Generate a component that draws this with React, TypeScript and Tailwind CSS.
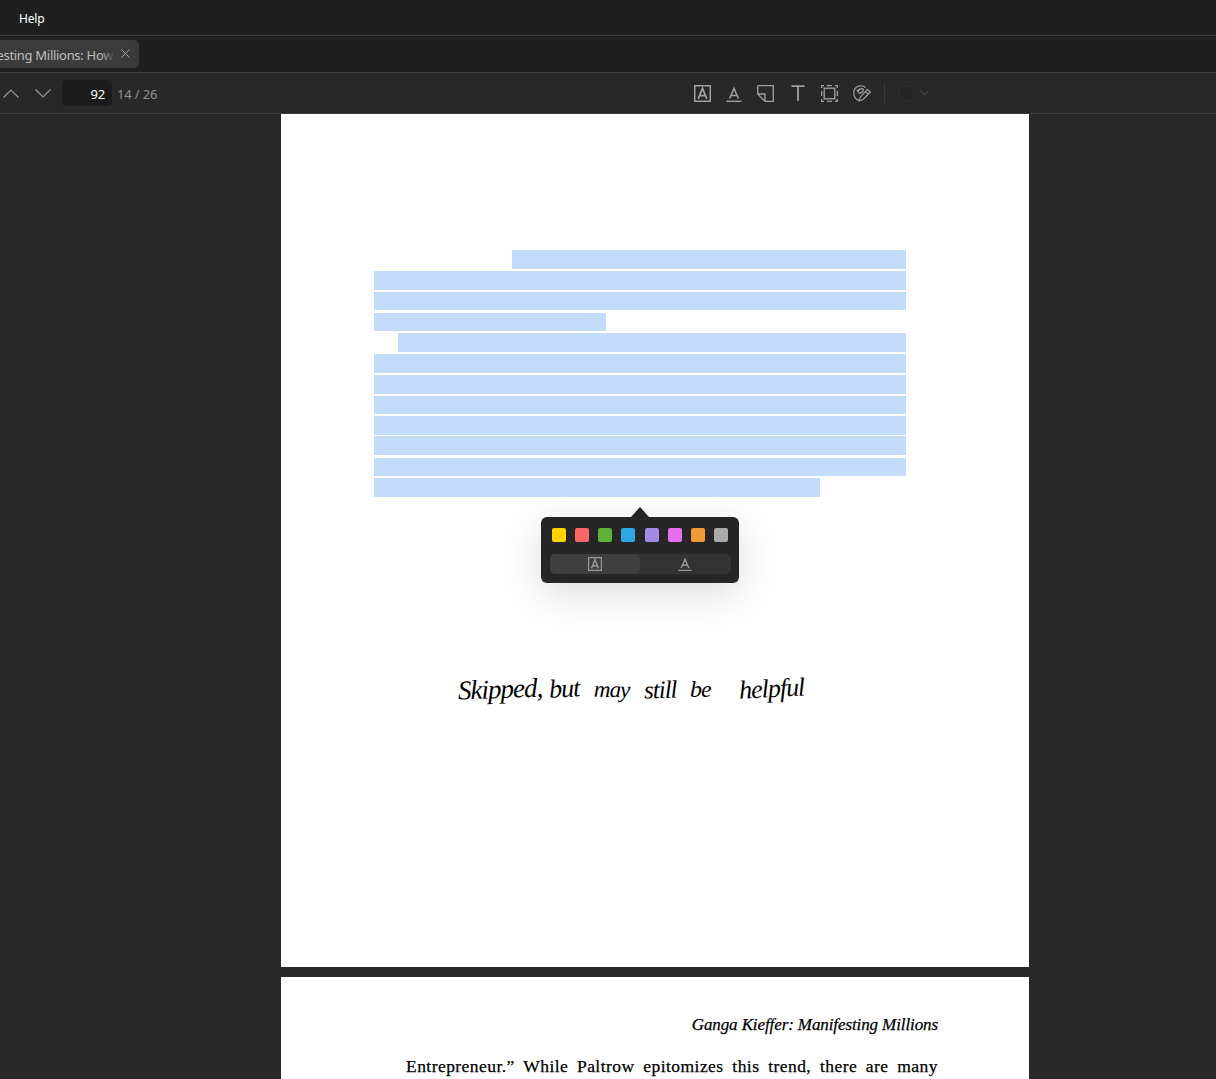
const swatches = [
  "bg-[#ffd400]",
  "bg-[#ff6666]",
  "bg-[#5fb236]",
  "bg-[#2ea8e5]",
  "bg-[#a28ae5]",
  "bg-[#e56eee]",
  "bg-[#f19837]",
  "bg-[#aaaaaa]",
];

const highlightRows = [
  "mt-0 ml-[138px] w-[394px] h-[19px]",
  "mt-[2px] ml-0 w-[532px] h-[19px]",
  "mt-[2px] ml-0 w-[532px] h-[18px]",
  "mt-[3px] ml-0 w-[232px] h-[18px]",
  "mt-[2px] ml-[24px] w-[508px] h-[19px]",
  "mt-[2px] ml-0 w-[532px] h-[19px]",
  "mt-[2px] ml-0 w-[532px] h-[19px]",
  "mt-[2px] ml-0 w-[532px] h-[18px]",
  "mt-[2px] ml-0 w-[532px] h-[19px]",
  "mt-[1px] ml-0 w-[532px] h-[19px]",
  "mt-[3px] ml-0 w-[532px] h-[18px]",
  "mt-[2px] ml-0 w-[446px] h-[19px]",
];

const inkWords = [
  { text: "Skipped,", cls: "w-[84px] ml-0 text-[27px] -rotate-2" },
  { text: "but", cls: "w-[33px] ml-[7px] text-[26px] -rotate-3" },
  { text: "may", cls: "w-[36px] ml-[12px] text-[23px] rotate-1" },
  { text: "still", cls: "w-[36px] ml-[14px] text-[25px] -rotate-2" },
  { text: "be", cls: "w-[24px] ml-[10px] text-[24px] rotate-0" },
  { text: "helpful", cls: "w-[68px] ml-[25px] text-[26px] -rotate-3" },
];

function BoxA({ className }: { className: string }) {
  return (
    <svg viewBox="0 0 16 16" fill="none" className={className}>
      <rect x="0.7" y="0.7" width="14.6" height="14.6" stroke="currentColor" strokeWidth="1.4" />
      <path d="M4 13 8 3l4 10M5.3 10h5.4" stroke="currentColor" strokeWidth="1.6" />
    </svg>
  );
}

function UnderA({ className }: { className: string }) {
  return (
    <svg viewBox="0 0 16 16" fill="none" className={className}>
      <path d="M3.6 12.5 8 2.5l4.4 10M5 9.5h6" stroke="currentColor" strokeWidth="1.6" />
      <path d="M0.5 15.3h15" stroke="currentColor" strokeWidth="1.4" />
    </svg>
  );
}

function ToolIcons() {
  return (
    <div className="flex items-center text-[#a0a0a0]">
      <BoxA className="w-[17px] h-[17px] -ml-px" />
      <UnderA className="w-[16px] h-[16px] ml-[15px] mt-[1px]" />
      <svg viewBox="0 0 17 17" fill="none" className="w-[17px] h-[17px] ml-[15px]">
        <path d="M.7.7h15.6v15.6H8L.7 9V.7M.7 9H8v7.3" stroke="currentColor" strokeWidth="1.3" />
      </svg>
      <svg viewBox="0 0 14 16" fill="none" className="w-[14px] h-[16px] ml-[17px]">
        <path d="M.5 1.2h13M7 1.2V16" stroke="currentColor" strokeWidth="1.8" />
      </svg>
      <svg viewBox="0 0 17 17" fill="none" className="w-[17px] h-[17px] ml-[16px]">
        <rect x="3.2" y="3.2" width="10.6" height="10.6" stroke="currentColor" strokeWidth="1.3" />
        <path d="M.7 3V.7H3M6 .7h5M14 .7h2.3V3M16.3 6v5M16.3 14v2.3H14M11 16.3H6M3 16.3H.7V14M.7 11V6" stroke="currentColor" strokeWidth="1.3" />
      </svg>
      <svg viewBox="0 0 18 17" fill="none" className="w-[18px] h-[17px] ml-[15px]">
        <path d="M12.5 2.5C9.5-.2 4 .6 1.8 3.8c-2 3-1 8.8 2 10.8.8.6 1.8.6 2.4.2M3.6 6.2C5.6 3.6 9.8 3 10.4 4.6c.6 1.8-3.8 4.6-5 3-.7-1 .4-2.8 1.8-3.4" stroke="currentColor" strokeWidth="1.2" />
        <path d="M14.4 4.4l2.9 2.6-7.5 7.7-3.6 1.1 1-3.6 7.2-7.8ZM12.4 6.6l2.9 2.6" stroke="currentColor" strokeWidth="1.2" />
      </svg>
    </div>
  );
}

function HighlightPopover() {
  return (
    <div className="absolute left-[260px] top-[393px] w-[198px]">
      <div className="mx-auto w-0 h-0 border-x-[9px] border-x-transparent border-b-[10px] border-b-[#262626]" />
      <div className="h-[66px] rounded-[6px] bg-[#262626] shadow-[0_10px_40px_rgba(0,0,0,0.14)] px-[9px] pt-[11px]">
        <div className="flex justify-between pl-[2px] pr-[2px]">
          {swatches.map((c) => (
            <div key={c} className={`w-[14px] h-[14px] rounded-[2px] ${c}`} />
          ))}
        </div>
        <div className="mt-[12px] flex w-[181px] h-[20px] rounded-[5px] bg-[#333333] text-[#9a9a9a]">
          <div className="w-[90px] rounded-[5px] bg-[#3f3f3f] flex items-center justify-center">
            <BoxA className="w-[14px] h-[14px]" />
          </div>
          <div className="flex-1 flex items-center justify-center pr-[2px]">
            <UnderA className="w-[14px] h-[14px]" />
          </div>
        </div>
      </div>
    </div>
  );
}

export default function App() {
  return (
    <div className="w-[1216px] h-[1079px] overflow-hidden bg-[#282828] font-['Noto_Sans',sans-serif]">
      <div className="h-[36px] bg-[#1f1f1f] border-b border-[#3d3d3d] pl-[19px] pt-[10px] text-[12px] tracking-[-0.2px] leading-[18px] text-white">
        Help
      </div>

      <div className="h-[37px] bg-[#1f1f1f] border-b border-[#3d3d3d] overflow-hidden pt-[4px]">
        <div className="relative ml-[-49px] w-[188px] h-[28px] rounded-[5px] bg-[#3b3b3b] flex items-center pl-[12px] text-[#bdbdbd]">
          <span className="w-[154px] mt-[3px] whitespace-nowrap overflow-hidden text-[13px] tracking-[-0.3px]">
            Manifesting Millions: How
          </span>
          <div className="absolute left-[150px] top-0 w-[14px] h-[28px] bg-gradient-to-r from-transparent to-[#3b3b3b]" />
          <svg viewBox="0 0 10 10" fill="none" className="absolute left-[170px] top-[9px] w-[9px] h-[9px]">
            <path d="M.5.5l9 9M9.5.5l-9 9" stroke="#a8a8a8" />
          </svg>
        </div>
      </div>

      <div className="h-[41px] bg-[#282828] border-b border-[#3d3d3d] flex items-center relative">
        <svg viewBox="0 0 16 9" fill="none" className="ml-[3px] w-[16px] h-[9px]">
          <path d="M.5 8.5 8 1l7.5 7.5" stroke="#9a9a9a" strokeWidth="1.2" />
        </svg>
        <svg viewBox="0 0 16 9" fill="none" className="ml-[16px] w-[16px] h-[9px]">
          <path d="M.5.5 8 8l7.5-7.5" stroke="#9a9a9a" strokeWidth="1.2" />
        </svg>
        <div className="ml-[11px] w-[50px] h-[26px] rounded-[4px] bg-[#1c1c1c] text-right pr-[7px] text-[13px] leading-[29px] tracking-[-0.2px] text-white">
          92
        </div>
        <span className="ml-[5px] text-[13px] mt-[3px] tracking-[-0.15px] text-[#8f8f8f]">14 / 26</span>
        <div className="ml-[538px]">
          <ToolIcons />
        </div>
        <div className="ml-[13px] w-px h-[20px] bg-[#3a3a3a]" />
        <div className="ml-[14px] w-[15px] h-[15px] rounded-[2px] bg-[#262626] border border-[#2e2e2e]" />
        <svg viewBox="0 0 10 6" fill="none" className="ml-[6px] w-[9px] h-[6px]">
          <path d="M.5.5 5 5 9.5.5" stroke="#5a5a5a" />
        </svg>
      </div>

      <div className="ml-[281px] w-[748px]">
        <div className="relative h-[853px] bg-white pl-[93px] pt-[136px]">
          {highlightRows.map((row, i) => (
            <div key={i} className={`bg-[#c4dcfc] ${row}`} />
          ))}
          <HighlightPopover />
          <div className="mt-[167px] ml-[84px] flex items-center h-[50px] text-black italic font-['Liberation_Serif',serif] leading-none">
            {inkWords.map((w) => (
              <span key={w.text} className={`block whitespace-nowrap tracking-[-1px] ${w.cls}`}>
                {w.text}
              </span>
            ))}
          </div>
        </div>

        <div className="mt-[10px] h-[200px] bg-white pl-[125px] pr-[91px] pt-[38px] font-['Liberation_Serif',serif] text-black [-webkit-text-stroke:0.25px_black]">
          <div className="text-right italic text-[17px] leading-[20px] tracking-[-0.1px]">
            Ganga Kieffer: Manifesting Millions
          </div>
          <div className="mt-[20px] text-[17.5px] leading-[22px] tracking-[0.45px] text-justify [text-align-last:justify]">
            Entrepreneur.” While Paltrow epitomizes this trend, there are many
          </div>
        </div>
      </div>
    </div>
  );
}
